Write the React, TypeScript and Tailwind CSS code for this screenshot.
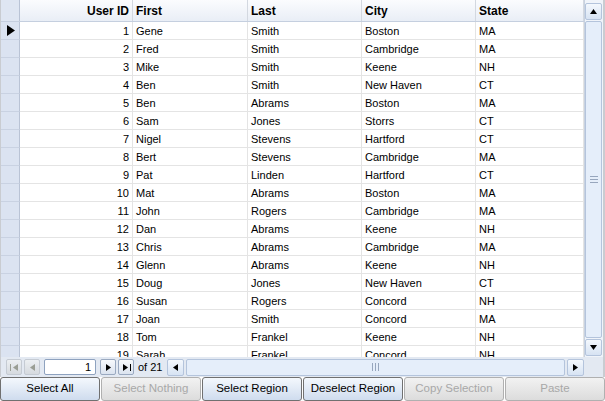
const ROWS = [
  [1, "Gene", "Smith", "Boston", "MA"],
  [2, "Fred", "Smith", "Cambridge", "MA"],
  [3, "Mike", "Smith", "Keene", "NH"],
  [4, "Ben", "Smith", "New Haven", "CT"],
  [5, "Ben", "Abrams", "Boston", "MA"],
  [6, "Sam", "Jones", "Storrs", "CT"],
  [7, "Nigel", "Stevens", "Hartford", "CT"],
  [8, "Bert", "Stevens", "Cambridge", "MA"],
  [9, "Pat", "Linden", "Hartford", "CT"],
  [10, "Mat", "Abrams", "Boston", "MA"],
  [11, "John", "Rogers", "Cambridge", "MA"],
  [12, "Dan", "Abrams", "Keene", "NH"],
  [13, "Chris", "Abrams", "Cambridge", "MA"],
  [14, "Glenn", "Abrams", "Keene", "NH"],
  [15, "Doug", "Jones", "New Haven", "CT"],
  [16, "Susan", "Rogers", "Concord", "NH"],
  [17, "Joan", "Smith", "Concord", "MA"],
  [18, "Tom", "Frankel", "Keene", "NH"],
  [19, "Sarah", "Frankel", "Concord", "NH"],
] as const;

const COLS = [
  { label: "User ID", w: "w-[113px]", right: true },
  { label: "First", w: "w-[115px]", right: false },
  { label: "Last", w: "w-[114px]", right: false },
  { label: "City", w: "w-[114px]", right: false },
  { label: "State", w: "w-[108px]", right: false },
];

const BUTTONS = [
  { label: "Select All", enabled: true },
  { label: "Select Nothing", enabled: false },
  { label: "Select Region", enabled: true },
  { label: "Deselect Region", enabled: true },
  { label: "Copy Selection", enabled: false },
  { label: "Paste", enabled: false },
];

function Tri({ dir, className = "" }: { dir: "up" | "down" | "left" | "right"; className?: string }) {
  const pts = {
    up: "1,6 4.5,1 8,6",
    down: "1,1 4.5,6 8,1",
    left: "6,1 1,4.5 6,8",
    right: "1,1 6,4.5 1,8",
  }[dir];
  const vb = dir === "up" || dir === "down" ? "0 0 9 7" : "0 0 7 9";
  const size = dir === "up" || dir === "down" ? "w-[9px] h-[7px]" : "w-[7px] h-[9px]";
  return (
    <svg viewBox={vb} className={`${size} ${className}`}>
      <polygon points={pts} fill="currentColor" />
    </svg>
  );
}

function ScrollBtn({ dir }: { dir: "up" | "down" | "left" | "right" }) {
  return (
    <div className="w-[17px] h-[17px] shrink-0 flex items-center justify-center rounded-[2px] border border-[#b4c4dc] bg-gradient-to-b from-[#f4f8fd] to-[#d7e3f3] text-black">
      <Tri dir={dir} />
    </div>
  );
}

function NavBtn({ children, enabled }: { children: React.ReactNode; enabled: boolean }) {
  return (
    <div
      className={`w-[16px] h-[16px] shrink-0 flex items-center justify-center rounded-[2px] border ${
        enabled
          ? "border-[#9aa9c0] bg-gradient-to-b from-[#f7f9fc] to-[#dbe3ef] text-black"
          : "border-[#c5cbd3] bg-gradient-to-b from-[#eceff2] to-[#d6dadf] text-[#9a9e94]"
      }`}
    >
      {children}
    </div>
  );
}

export default function App() {
  return (
    <div
      className="w-[605px] h-[401px] flex flex-col bg-white text-[11px] text-black overflow-hidden"
      style={{ fontFamily: '"Liberation Sans", Arial, sans-serif' }}
    >
      {/* Grid */}
      <div className="h-[357px] flex border-l border-[#c9ccd1] border-r-2 border-r-[#c9ccd1]">
        <div className="flex-1 flex flex-col overflow-hidden">
          {/* header */}
          <div className="h-[22px] shrink-0 flex bg-gradient-to-b from-[#fbfcfe] to-[#e9eef6] border-b border-[#c5cfdf]">
            <div className="w-[19px] shrink-0 border-r border-[#b9c3d5] bg-[#dfe6f2]" />
            {COLS.map((c) => (
              <div
                key={c.label}
                className={`${c.w} shrink-0 flex items-center px-[3px] font-bold text-[12px] border-r border-[#d3d8e0] ${
                  c.right ? "justify-end" : ""
                }`}
              >
                {c.label}
              </div>
            ))}
          </div>
          {/* rows */}
          {ROWS.map((r, i) => (
            <div key={r[0]} className="h-[18px] shrink-0 flex">
              <div className="w-[19px] shrink-0 flex items-center pl-[6px] bg-[#dbe3f1] border-r border-[#b9c3d5] border-b border-b-[#c9d2e2]">
                {i === 0 && (
                  <svg viewBox="0 0 8 11" className="w-[8px] h-[11px]">
                    <polygon points="0,0 8,5.5 0,11" fill="#000" />
                  </svg>
                )}
              </div>
              {r.map((v, j) => (
                <div
                  key={j}
                  className={`${COLS[j].w} shrink-0 flex items-center px-[3px] pt-px border-r border-b border-[#e4e4e4] ${
                    COLS[j].right ? "justify-end" : ""
                  }`}
                >
                  {v}
                </div>
              ))}
            </div>
          ))}
        </div>
        {/* vertical scrollbar */}
        <div className="w-[19px] shrink-0 flex flex-col pt-[3px] pb-[1px] bg-[#f0f4fa] border-l border-[#c8d2e0]">
          <ScrollBtn dir="up" />
          <div className="flex-1 my-[1px] w-[17px] rounded-[2px] border border-[#b4c4dc] bg-[#e5eefa] flex items-center justify-center">
            <div className="flex flex-col gap-[2px]">
              <div className="w-[8px] h-px bg-[#97a6bd]" />
              <div className="w-[8px] h-px bg-[#97a6bd]" />
              <div className="w-[8px] h-px bg-[#97a6bd]" />
            </div>
          </div>
          <ScrollBtn dir="down" />
        </div>
      </div>

      {/* navigator */}
      <div className="h-[20px] shrink-0 flex items-center gap-[2px] pl-[5px] pr-[19px] bg-[#e3e9f2] border-l border-[#c9ccd1] border-r-2 border-r-[#c9ccd1]">
        <NavBtn enabled={false}>
          <div className="flex items-center gap-[1px]">
            <div className="w-px h-[7px] bg-current" />
            <Tri dir="left" className="w-[4px] h-[7px]" />
          </div>
        </NavBtn>
        <NavBtn enabled={false}>
          <Tri dir="left" className="w-[4px] h-[7px]" />
        </NavBtn>
        <div className="w-[52px] h-[16px] mx-[2px] shrink-0 bg-white border border-[#8ea2bf] rounded-[2px] flex items-center justify-end pr-[4px]">
          1
        </div>
        <NavBtn enabled>
          <Tri dir="right" className="w-[4px] h-[7px]" />
        </NavBtn>
        <NavBtn enabled>
          <div className="flex items-center gap-[1px]">
            <Tri dir="right" className="w-[4px] h-[7px]" />
            <div className="w-px h-[7px] bg-current" />
          </div>
        </NavBtn>
        <span className="ml-[2px] mr-[3px]">of 21</span>
        <ScrollBtn dir="left" />
        <div className="flex-1 h-[17px] rounded-[2px] border border-[#b4c4dc] bg-[#e5eefa] flex items-center justify-center">
          <div className="flex gap-[2px]">
            <div className="w-px h-[8px] bg-[#97a6bd]" />
            <div className="w-px h-[8px] bg-[#97a6bd]" />
            <div className="w-px h-[8px] bg-[#97a6bd]" />
          </div>
        </div>
        <ScrollBtn dir="right" />
      </div>

      {/* buttons */}
      <div className="flex-1 flex gap-px bg-white">
        {BUTTONS.map((b) => (
          <div
            key={b.label}
            className={`flex-1 flex items-center justify-center rounded-[3px] border text-[11.5px] ${
              b.enabled
                ? "border-[#707070] bg-gradient-to-b from-[#f4f8fd] to-[#cfdcee] text-black"
                : "border-[#b0b0b0] bg-gradient-to-b from-[#f2f2f2] to-[#dcdcdc] text-[#a8a8a8]"
            }`}
          >
            {b.label}
          </div>
        ))}
      </div>
    </div>
  );
}
